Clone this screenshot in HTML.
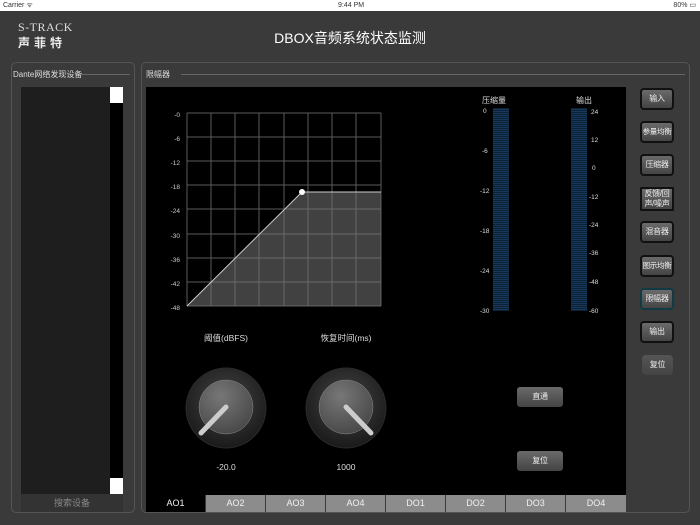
<!DOCTYPE html><html><head><meta charset="utf-8"><style>
*{margin:0;padding:0;box-sizing:border-box}
body{width:700px;height:525px;background:#3a3a3a;font-family:"Liberation Sans","Noto Sans CJK SC",sans-serif;position:relative;overflow:hidden;color:#fff}
.a{position:absolute}
.sb{left:0;top:0;width:700px;height:11px;background:#fff;color:#333;font-size:7px;line-height:11px}
.panel{border:1px solid #555;border-radius:5px}
.lg{font-size:8px;color:#ddd}
.btn{background:linear-gradient(#6a6a6a,#444);border:2px solid #111;border-radius:4px;font-size:8px;color:#eee;text-align:center;display:flex;align-items:center;justify-content:center;line-height:10px;white-space:nowrap;letter-spacing:-0.3px}
.tab{top:495px;width:59px;height:17px;background:#8c8c8c;color:#f0f0f0;font-size:9px;text-align:center;line-height:17px}
</style></head><body>
<div class="a sb"><span style="position:absolute;left:3px">Carrier ᯤ</span><span style="position:absolute;left:338px">9:44 PM</span><span style="position:absolute;right:4px">80% ▭</span></div>
<div class="a" style="left:18px;top:20px;font-family:'Liberation Serif',serif;font-size:12px;color:#ddd;letter-spacing:0.5px">S-TRACK</div>
<div class="a" style="left:18px;top:34px;font-size:12px;font-weight:bold;color:#eee;letter-spacing:4px">声菲特</div>
<div class="a" style="left:0;width:700px;top:28px;text-align:center;font-size:14px;color:#fff">DBOX音频系统状态监测</div>

<div class="a panel" style="left:11px;top:62px;width:124px;height:451px"></div>
<div class="a lg" style="left:13px;top:69px;background:#3a3a3a;padding-right:3px">Dante网络发现设备</div>
<div class="a" style="left:80px;top:74px;width:50px;height:1px;background:#666"></div>
<div class="a" style="left:21px;top:87px;width:89px;height:407px;background:#1e1e1e"></div>
<div class="a" style="left:110px;top:87px;width:13px;height:407px;background:#000"></div>
<div class="a" style="left:110px;top:87px;width:13px;height:16px;background:#fff"></div>
<div class="a" style="left:110px;top:478px;width:13px;height:16px;background:#fff"></div>
<div class="a" style="left:21px;top:494px;width:102px;height:18px;background:#333;color:#888;font-size:9px;text-align:center;line-height:18px">搜索设备</div>

<div class="a panel" style="left:141px;top:62px;width:549px;height:451px"></div>
<div class="a lg" style="left:146px;top:69px">限幅器</div>
<div class="a" style="left:181px;top:74px;width:504px;height:1px;background:#666"></div>
<div class="a" style="left:146px;top:87px;width:480px;height:408px;background:#000"></div>

<svg class="a" style="left:146px;top:87px" width="480" height="408">
<g stroke="#5a5a5a" stroke-width="1">
<line x1="41" y1="26" x2="41" y2="219"/><line x1="65" y1="26" x2="65" y2="219"/><line x1="89" y1="26" x2="89" y2="219"/><line x1="113" y1="26" x2="113" y2="219"/><line x1="138" y1="26" x2="138" y2="219"/><line x1="162" y1="26" x2="162" y2="219"/><line x1="186" y1="26" x2="186" y2="219"/><line x1="210" y1="26" x2="210" y2="219"/><line x1="235" y1="26" x2="235" y2="219"/>
<line x1="41" y1="26" x2="235" y2="26"/><line x1="41" y1="50" x2="235" y2="50"/><line x1="41" y1="74" x2="235" y2="74"/><line x1="41" y1="98" x2="235" y2="98"/><line x1="41" y1="122" x2="235" y2="122"/><line x1="41" y1="147" x2="235" y2="147"/><line x1="41" y1="171" x2="235" y2="171"/><line x1="41" y1="195" x2="235" y2="195"/><line x1="41" y1="219" x2="235" y2="219"/>
</g>
<polygon points="41,219 156,105 235,105 235,219" fill="#777" fill-opacity="0.55"/>
<polyline points="41,219 156,105 235,105" fill="none" stroke="#ccc" stroke-width="1"/>
<circle cx="156" cy="105" r="3" fill="#fff"/>
<g fill="#ccc" font-size="6.5" text-anchor="end">
<text x="34" y="30">-0</text><text x="34" y="54">-6</text><text x="34" y="78">-12</text><text x="34" y="102">-18</text><text x="34" y="126">-24</text><text x="34" y="151">-30</text><text x="34" y="175">-36</text><text x="34" y="199">-42</text><text x="34" y="223">-48</text>
</g>
<defs><pattern id="m" width="4" height="2" patternUnits="userSpaceOnUse"><rect width="4" height="1.3" fill="#17385a"/><rect y="1.3" width="4" height="0.7" fill="#0d2236"/></pattern>
<radialGradient id="k1" cx="50%" cy="40%" r="60%"><stop offset="0" stop-color="#444"/><stop offset="1" stop-color="#1a1a1a"/></radialGradient>
<radialGradient id="k2" cx="40%" cy="30%" r="70%"><stop offset="0" stop-color="#777"/><stop offset="1" stop-color="#4a4a4a"/></radialGradient>
<linearGradient id="ind" x1="0" y1="0" x2="1" y2="1"><stop offset="0" stop-color="#666"/><stop offset="1" stop-color="#ddd"/></linearGradient></defs>
<rect x="347" y="21" width="16" height="203" fill="url(#m)"/>
<rect x="425" y="21" width="16" height="203" fill="url(#m)"/>
<g fill="#ddd" font-size="6.5">
<text x="336" y="16" font-size="8">压缩量</text><text x="430" y="16" font-size="8">输出</text>
<text x="337" y="26">0</text><text x="336" y="66">-6</text><text x="334" y="106">-12</text><text x="334" y="146">-18</text><text x="334" y="186">-24</text><text x="334" y="226">-30</text>
<text x="445" y="27">24</text><text x="445" y="55">12</text><text x="446" y="83">0</text><text x="443" y="112">-12</text><text x="443" y="140">-24</text><text x="443" y="168">-36</text><text x="443" y="197">-48</text><text x="443" y="226">-60</text>
</g>
<g fill="#ddd" font-size="8.5" text-anchor="middle">
<text x="80" y="254">阈值(dBFS)</text><text x="200" y="254">恢复时间(ms)</text>
<text x="80" y="383">-20.0</text><text x="200" y="383">1000</text>
</g>
<circle cx="80" cy="321" r="40" fill="url(#k1)" stroke="#2a2a2a"/>
<circle cx="80" cy="320" r="27" fill="url(#k2)" stroke="#888" stroke-width="0.5"/>
<line x1="80" y1="320" x2="55" y2="346" stroke="#ccc" stroke-width="5" stroke-linecap="round"/>
<circle cx="200" cy="321" r="40" fill="url(#k1)" stroke="#2a2a2a"/>
<circle cx="200" cy="320" r="27" fill="url(#k2)" stroke="#888" stroke-width="0.5"/>
<line x1="200" y1="320" x2="225" y2="346" stroke="#ccc" stroke-width="5" stroke-linecap="round"/>
</svg>

<div class="a btn" style="left:517px;top:387px;width:46px;height:20px;border:none;border-radius:3px">直通</div>
<div class="a btn" style="left:517px;top:451px;width:46px;height:20px;border:none;border-radius:3px">复位</div>

<div class="a btn" style="left:640px;top:88px;width:34px;height:22px">输入</div>
<div class="a btn" style="left:640px;top:121px;width:34px;height:22px;font-size:7.5px">参量均衡</div>
<div class="a btn" style="left:640px;top:154px;width:34px;height:22px">压缩器</div>
<div class="a btn" style="left:640px;top:187px;width:34px;height:24px;border-radius:1px">反馈/回<br>声/噪声</div>
<div class="a btn" style="left:640px;top:221px;width:34px;height:22px">混音器</div>
<div class="a btn" style="left:640px;top:255px;width:34px;height:22px;font-size:7.5px">图示均衡</div>
<div class="a btn" style="left:640px;top:288px;width:34px;height:22px;border-color:#123a44">限幅器</div>
<div class="a btn" style="left:640px;top:321px;width:34px;height:22px">输出</div>
<div class="a btn" style="left:642px;top:355px;width:31px;height:20px;border:none;background:linear-gradient(#555,#444)">复位</div>

<div class="a tab" style="left:146px;background:#000">AO1</div>
<div class="a tab" style="left:206px">AO2</div>
<div class="a tab" style="left:266px">AO3</div>
<div class="a tab" style="left:326px">AO4</div>
<div class="a tab" style="left:386px">DO1</div>
<div class="a tab" style="left:446px">DO2</div>
<div class="a tab" style="left:506px">DO3</div>
<div class="a tab" style="left:566px;width:60px">DO4</div>
</body></html>
